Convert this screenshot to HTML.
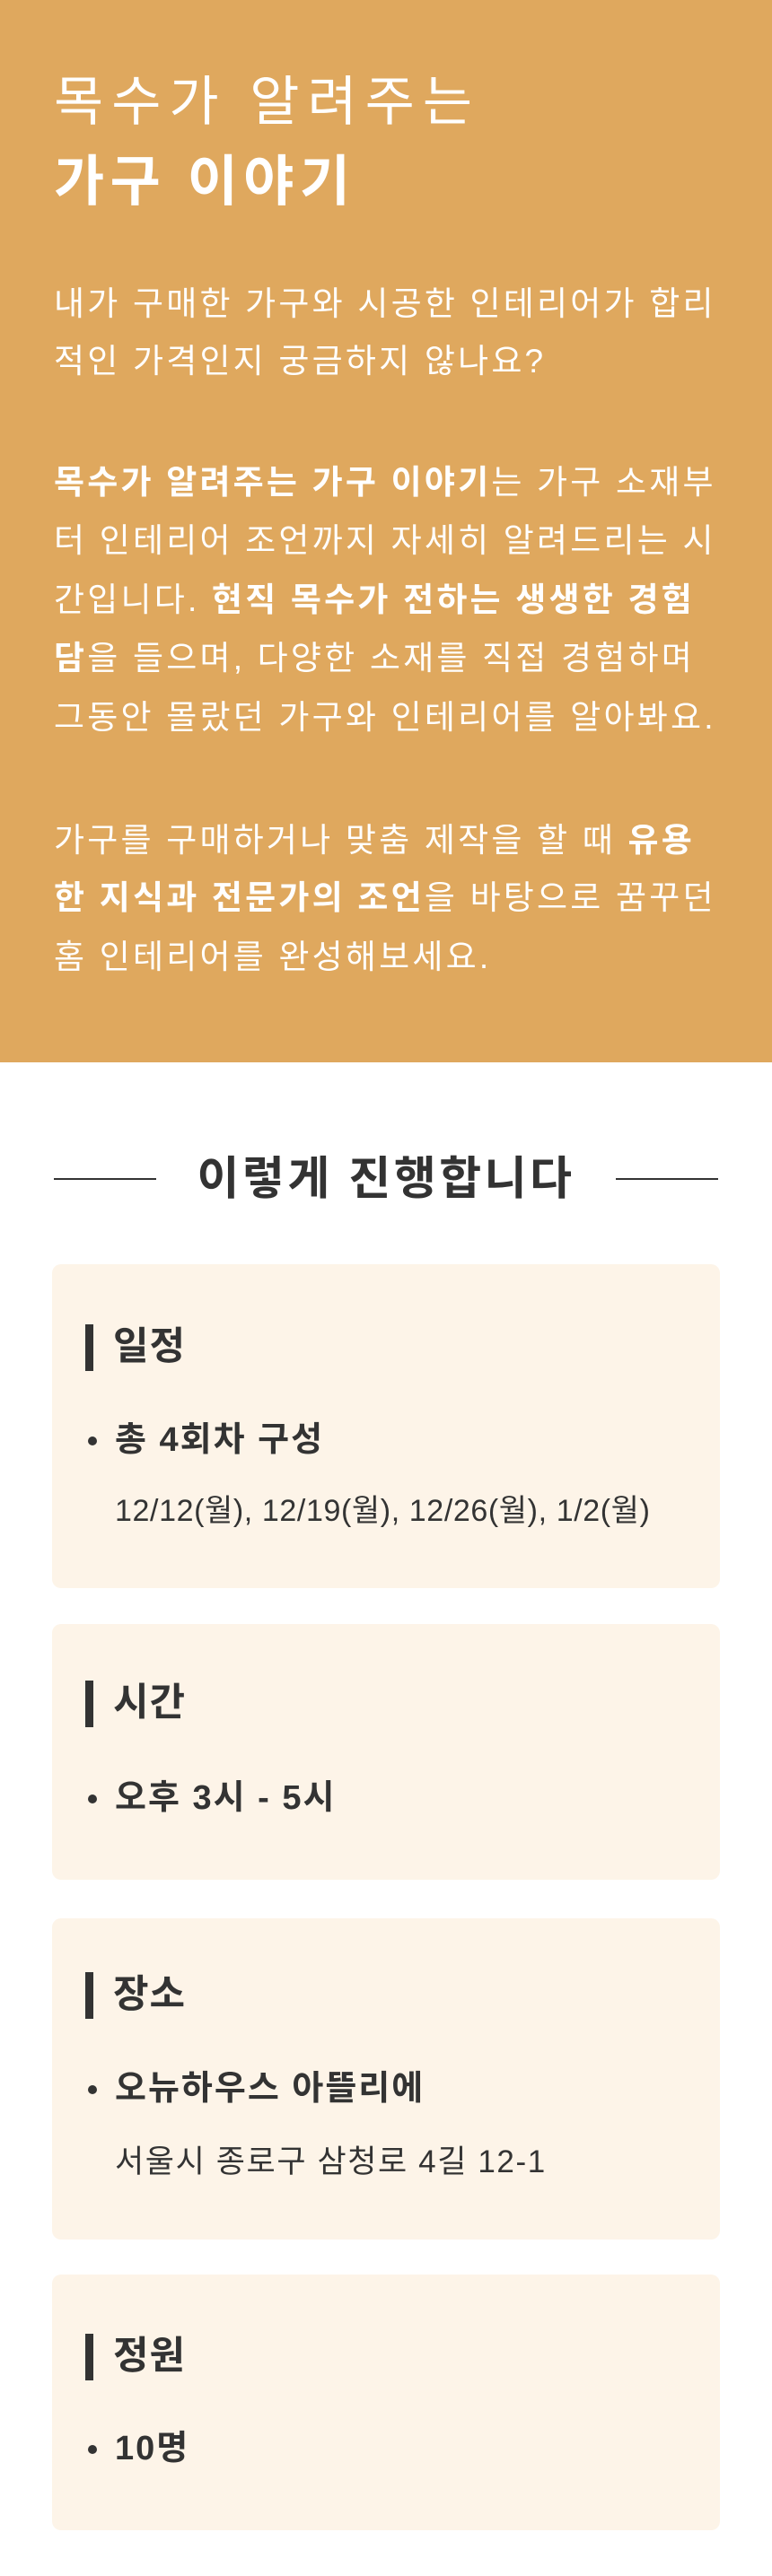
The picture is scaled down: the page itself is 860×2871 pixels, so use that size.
<!DOCTYPE html>
<html><head><meta charset="utf-8"><style>
*{margin:0;padding:0;box-sizing:border-box}
body{width:860px;height:2871px;background:#fff;font-family:"Liberation Sans","Noto Sans CJK KR",sans-serif;position:relative;overflow:hidden;color:#333}
.hdr{position:absolute;left:0;top:0;width:860px;height:1184px;background:#dfa85e;color:#fff}
.t{position:absolute;left:60px;white-space:nowrap;line-height:1}
.p{position:absolute;left:60px;white-space:nowrap;font-size:37px;line-height:64px;height:64px;color:#fff;letter-spacing:3.2px}
b{font-weight:700}
.line{position:absolute;top:1313px;height:2px;width:114px;background:#333}
.card{position:absolute;left:58px;width:744px;background:#fdf4e8;border-radius:10px}
.h{position:absolute;left:68px;font-size:43px;font-weight:700;line-height:54px;white-space:nowrap;color:#333;letter-spacing:1px}
.h:before{content:"";position:absolute;left:-31px;top:2px;width:9px;height:52px;background:#333}
.b{position:absolute;left:70px;font-size:38px;font-weight:700;line-height:50px;white-space:nowrap;color:#333;letter-spacing:2px}
.b:before{content:"";position:absolute;left:-30px;top:21px;width:10px;height:10px;border-radius:50%;background:#333}
.s{position:absolute;left:70px;font-size:34px;line-height:50px;white-space:nowrap;color:#333;letter-spacing:0.6px}
</style></head><body>
<div class="hdr">
<div class="t" style="top:84px;font-size:60px;letter-spacing:9px">목수가 알려주는</div>
<div class="t" style="top:172px;font-size:61px;font-weight:700;letter-spacing:6.5px">가구 이야기</div>
<div class="p" style="top:307px">내가 구매한 가구와 시공한 인테리어가 합리</div>
<div class="p" style="top:371px">적인 가격인지 궁금하지 않나요?</div>
<div class="p" style="top:506px"><b>목수가 알려주는 가구 이야기</b>는 가구 소재부</div>
<div class="p" style="top:571px">터 인테리어 조언까지 자세히 알려드리는 시</div>
<div class="p" style="top:637px">간입니다. <b>현직 목수가 전하는 생생한 경험</b></div>
<div class="p" style="top:702px"><b>담</b>을 들으며, 다양한 소재를 직접 경험하며</div>
<div class="p" style="top:768px">그동안 몰랐던 가구와 인테리어를 알아봐요.</div>
<div class="p" style="top:905px">가구를 구매하거나 맞춤 제작을 할 때 <b>유용</b></div>
<div class="p" style="top:969px"><b>한 지식과 전문가의 조언</b>을 바탕으로 꿈꾸던</div>
<div class="p" style="top:1035px">홈 인테리어를 완성해보세요.</div>
</div>
<div class="line" style="left:60px"></div>
<div class="line" style="left:686px"></div>
<div class="t" style="top:1286px;left:0;width:860px;text-align:center;font-size:51px;font-weight:700;color:#333;line-height:56px;letter-spacing:3.5px">이렇게 진행합니다</div>

<div class="card" style="top:1409px;height:361px">
<div class="h" style="top:65px">일정</div>
<div class="b" style="top:171px">총 4회차 구성</div>
<div class="s" style="top:250px">12/12(월), 12/19(월), 12/26(월), 1/2(월)</div>
</div>
<div class="card" style="top:1810px;height:285px">
<div class="h" style="top:61px">시간</div>
<div class="b" style="top:169px">오후 3시 - 5시</div>
</div>
<div class="card" style="top:2138px;height:358px">
<div class="h" style="top:58px">장소</div>
<div class="b" style="top:165px">오뉴하우스 아뜰리에</div>
<div class="s" style="top:247px;font-size:35px;letter-spacing:1.6px">서울시 종로구 삼청로 4길 12-1</div>
</div>
<div class="card" style="top:2535px;height:285px">
<div class="h" style="top:64px">정원</div>
<div class="b" style="top:169px">10명</div>
</div>
</body></html>
